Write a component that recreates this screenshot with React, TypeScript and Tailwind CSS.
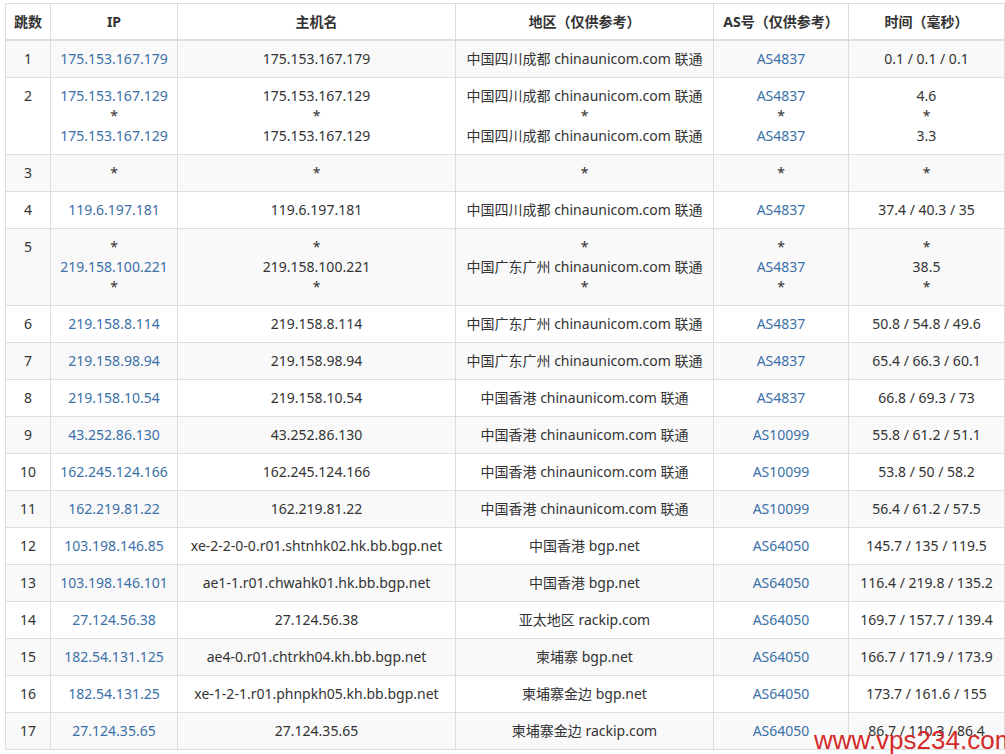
import React from "react";

type Row = [string, string[], string[], string[], string[], string[]];

const rows: Row[] = [
  ["1", ["175.153.167.179"], ["175.153.167.179"], ["中国四川成都 chinaunicom.com 联通"], ["AS4837"], ["0.1 / 0.1 / 0.1"]],
  ["2", ["175.153.167.129", "*", "175.153.167.129"], ["175.153.167.129", "*", "175.153.167.129"], ["中国四川成都 chinaunicom.com 联通", "*", "中国四川成都 chinaunicom.com 联通"], ["AS4837", "*", "AS4837"], ["4.6", "*", "3.3"]],
  ["3", ["*"], ["*"], ["*"], ["*"], ["*"]],
  ["4", ["119.6.197.181"], ["119.6.197.181"], ["中国四川成都 chinaunicom.com 联通"], ["AS4837"], ["37.4 / 40.3 / 35"]],
  ["5", ["*", "219.158.100.221", "*"], ["*", "219.158.100.221", "*"], ["*", "中国广东广州 chinaunicom.com 联通", "*"], ["*", "AS4837", "*"], ["*", "38.5", "*"]],
  ["6", ["219.158.8.114"], ["219.158.8.114"], ["中国广东广州 chinaunicom.com 联通"], ["AS4837"], ["50.8 / 54.8 / 49.6"]],
  ["7", ["219.158.98.94"], ["219.158.98.94"], ["中国广东广州 chinaunicom.com 联通"], ["AS4837"], ["65.4 / 66.3 / 60.1"]],
  ["8", ["219.158.10.54"], ["219.158.10.54"], ["中国香港 chinaunicom.com 联通"], ["AS4837"], ["66.8 / 69.3 / 73"]],
  ["9", ["43.252.86.130"], ["43.252.86.130"], ["中国香港 chinaunicom.com 联通"], ["AS10099"], ["55.8 / 61.2 / 51.1"]],
  ["10", ["162.245.124.166"], ["162.245.124.166"], ["中国香港 chinaunicom.com 联通"], ["AS10099"], ["53.8 / 50 / 58.2"]],
  ["11", ["162.219.81.22"], ["162.219.81.22"], ["中国香港 chinaunicom.com 联通"], ["AS10099"], ["56.4 / 61.2 / 57.5"]],
  ["12", ["103.198.146.85"], ["xe-2-2-0-0.r01.shtnhk02.hk.bb.bgp.net"], ["中国香港 bgp.net"], ["AS64050"], ["145.7 / 135 / 119.5"]],
  ["13", ["103.198.146.101"], ["ae1-1.r01.chwahk01.hk.bb.bgp.net"], ["中国香港 bgp.net"], ["AS64050"], ["116.4 / 219.8 / 135.2"]],
  ["14", ["27.124.56.38"], ["27.124.56.38"], ["亚太地区 rackip.com"], ["AS64050"], ["169.7 / 157.7 / 139.4"]],
  ["15", ["182.54.131.125"], ["ae4-0.r01.chtrkh04.kh.bb.bgp.net"], ["柬埔寨 bgp.net"], ["AS64050"], ["166.7 / 171.9 / 173.9"]],
  ["16", ["182.54.131.25"], ["xe-1-2-1.r01.phnpkh05.kh.bb.bgp.net"], ["柬埔寨金边 bgp.net"], ["AS64050"], ["173.7 / 161.6 / 155"]],
  ["17", ["27.124.35.65"], ["27.124.35.65"], ["柬埔寨金边 rackip.com"], ["AS64050"], ["86.7 / 110.3 / 86.4"]],
];

const widths = ["w-[45px]", "w-[127px]", "w-[278px]", "w-[258px]", "w-[135px]", "w-[156px]"];

function Cell({ lines, i, link }: { lines: string[]; i: number; link?: boolean }) {
  return (
    <td className={`${widths[i]} border border-[#ddd] align-top pt-[8px] pb-[8px] px-1 text-center leading-[20px] whitespace-nowrap`}>
      {lines.map((l, k) => (
        <div key={k} className={link && l !== "*" ? "text-[#3b70a8]" : ""}>{l}</div>
      ))}
    </td>
  );
}

export default function App() {
  return (
    <div className="relative w-[1005px] h-[754px] overflow-hidden bg-white pt-[3px] pl-[5px] text-[14px] text-[#333]" style={{ fontFamily: '"Noto Sans", "Noto Sans CJK SC", sans-serif' }}>
      <table className="border-collapse table-fixed w-[999px]">
        <thead>
          <tr className="h-[36px]">
            {["跳数", "IP", "主机名", "地区（仅供参考）", "AS号（仅供参考）", "时间（毫秒）"].map((h, i) => (
              <th key={i} className={`${widths[i]} border border-[#ddd] border-b-2 font-bold text-center px-1`}>{h}</th>
            ))}
          </tr>
        </thead>
        <tbody>
          {rows.map((r, idx) => (
            <tr key={idx} className={idx % 2 === 0 ? "bg-[#f9f9f9]" : "bg-white"}>
              <Cell lines={[r[0]]} i={0} />
              <Cell lines={r[1]} i={1} link />
              <Cell lines={r[2]} i={2} />
              <Cell lines={r[3]} i={3} />
              <Cell lines={r[4]} i={4} link />
              <Cell lines={r[5]} i={5} />
            </tr>
          ))}
        </tbody>
      </table>
      <div className="absolute left-[814px] top-[725px] whitespace-nowrap text-[26px] leading-[30px] text-[#d42a2a]" style={{ fontFamily: '"Liberation Sans", sans-serif' }}>
        www.vps234.com
      </div>
    </div>
  );
}
